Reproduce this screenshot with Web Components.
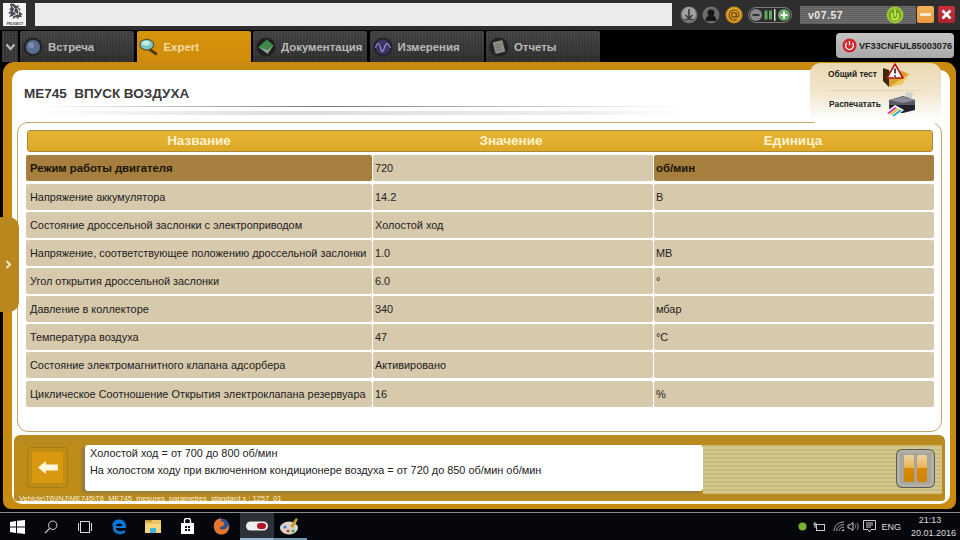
<!DOCTYPE html>
<html lang="ru"><head><meta charset="utf-8"><title>Expert</title>
<style>
html,body{margin:0;padding:0;width:960px;height:540px;overflow:hidden;background:#000;font-family:"Liberation Sans",Arial,sans-serif}
</style></head><body>
<app-shell></app-shell>
<script>
function def(name, html){
  const t=document.createElement('template');t.innerHTML=html;
  customElements.define(name,class extends HTMLElement{
    connectedCallback(){
      if(this.shadowRoot)return;
      const s=this.attachShadow({mode:'open'});s.appendChild(t.content.cloneNode(true));
      const h=customElements.get(name).after; if(h)h(this,s);
    }
  });
}
const icon={
lion:`<svg width="22" height="23" viewBox="0 0 22 23"><path d="M6 1c3-1 5 0 6 2l3-1-1 3 3 1-2 2 2 2 2 1-2 1 1 2-3 0-1 2-2-2-3 2 0-3-4 1 2-3-3-1 3-2-2-2 2-1z" fill="#4c4c54"/><path d="M8 3l3 3-2 2 4 3-4 2M13 5l2 3-1 4" stroke="#fff" stroke-width=".9" fill="none"/><text x="11" y="21.500" text-anchor="middle" font-family="Liberation Sans" font-weight="bold" font-size="3.400" fill="#444">PEUGEOT</text></svg>`,
dl:`<svg width="18" height="18" viewBox="0 0 18 18"><circle cx="9" cy="9" r="8.500" fill="#6f6f6f"/><circle cx="9" cy="8" r="7" fill="#a2a2a2"/><path d="M9 3v9M5.500 9 9 12.500 12.500 9M4.500 13.500h9" stroke="#3d3d3d" stroke-width="1.600" fill="none"/></svg>`,
user:`<svg width="18" height="18" viewBox="0 0 18 18"><circle cx="9" cy="9" r="8.500" fill="#6b6b6b"/><circle cx="9" cy="7" r="3.400" fill="#161616"/><path d="M3.500 15c0-4 2.500-5.500 5.500-5.500s5.500 1.500 5.500 5.500z" fill="#161616"/></svg>`,
at:`<svg width="18" height="18" viewBox="0 0 18 18"><circle cx="9" cy="9" r="8.500" fill="#c98b14"/><circle cx="9" cy="8.500" r="7" fill="#e0a430"/><circle cx="9" cy="9" r="2.400" fill="none" stroke="#6b4505" stroke-width="1.200"/><path d="M11.400 6.800v3.200c0 1.800 2.600 1.500 2.600-1 0-3-2.200-5-5-5a5 5 0 1 0 2.800 9.200" fill="none" stroke="#6b4505" stroke-width="1.200"/></svg>`,
zoom:`<svg width="44" height="16" viewBox="0 0 44 16"><rect x=".5" y=".5" width="43" height="15" rx="7.500" fill="#2c2c2c" stroke="#7c7c7c"/><circle cx="8" cy="8" r="6" fill="#8b8b8b"/><path d="M4.500 8h7" stroke="#333" stroke-width="2"/><rect x="16.500" y="3.500" width="3" height="9" fill="#5fa65f"/><rect x="21" y="3.500" width="3" height="9" fill="#5fa65f"/><rect x="26" y="2" width="1.500" height="12" fill="#ddd"/><circle cx="36" cy="8" r="6" fill="#66a866"/><path d="M32.500 8h7M36 4.500v7" stroke="#fff" stroke-width="2"/></svg>`,
green:`<svg width="18" height="18" viewBox="0 0 18 18"><circle cx="9" cy="9" r="8.500" fill="#98c62c"/><circle cx="9" cy="9" r="6" fill="#6fa51a"/><path d="M9 3.500v7M6 7v3.500a3 3 0 0 0 6 0V7" stroke="#d8ef6a" stroke-width="1.500" fill="none"/></svg>`,
power:`<svg width="15" height="15" viewBox="0 0 15 15"><circle cx="7.500" cy="7.500" r="7" fill="#d3252a"/><path d="M4.800 4.800a3.900 3.900 0 1 0 5.400 0M7.500 3v4.200" stroke="#fff" stroke-width="1.300" fill="none"/></svg>`,
globe:`<svg width="20" height="20" viewBox="0 0 24 24"><circle cx="12" cy="12" r="11.500" fill="#242424"/><circle cx="12" cy="12" r="8.500" fill="#5a6d92"/><circle cx="10" cy="10" r="3.500" fill="#7c8db0"/></svg>`,
lens:`<svg width="20" height="18" viewBox="0 0 26 22"><path d="M14 14l8 6" stroke="#4a3411" stroke-width="3.500" stroke-linecap="round"/><ellipse cx="10" cy="8" rx="9" ry="7" fill="#77c7c4" stroke="#5b5330" stroke-width="1.500"/><ellipse cx="9" cy="6" rx="5" ry="3" fill="#c4ece6"/></svg>`,
doc:`<svg width="20" height="20" viewBox="0 0 24 24"><circle cx="12" cy="12" r="11.500" fill="#202020"/><path d="M3 12 13 3l8 7-7 10z" fill="#3f8a46"/><path d="M3 12l11 8 7-10-7 6z" fill="#9aa39c"/></svg>`,
wave:`<svg width="20" height="20" viewBox="0 0 24 24"><circle cx="12" cy="12" r="11.500" fill="#222230"/><circle cx="12" cy="12" r="9" fill="#3b3560"/><path d="M3 13c2-7 4-7 6 0s3 5 5-1 4-5 7 1" fill="none" stroke="#a193e6" stroke-width="1.300"/></svg>`,
rep:`<svg width="20" height="20" viewBox="0 0 24 24"><circle cx="12" cy="12" r="11.500" fill="#222"/><rect x="6" y="5" width="12" height="14" rx="1" fill="#8e8e88" transform="rotate(-14 12 12)"/><path d="M8 9h8M8 12h8M8 15h6" stroke="#6f6f6a" transform="rotate(-14 12 12)"/></svg>`,
warn:`<svg width="28" height="25" viewBox="0 0 28 25"><path d="M1 5l6 2v17L1 18z" fill="#3a2a08"/><path d="M7 8h13l7 3-7 10-13 3z" fill="#d6a22c"/><path d="M7 24l20-13-7 10z" fill="#f0c755"/><path d="M12 1l8 14H4z" transform="translate(1 0)" fill="#fff" stroke="#b11" stroke-width="1.600" stroke-linejoin="round"/><path d="M13 5.500v5" stroke="#333" stroke-width="1.800"/><circle cx="13" cy="13" r="1" fill="#333"/></svg>`,
printer:`<svg width="32" height="27" viewBox="0 0 32 27"><path d="M20 7l1-6h7l-1 6z" fill="#cfcfcf"/><path d="M4 9 18 5l12 4v10H4z" fill="#5a5a66"/><path d="M4 9l14-3 12 3-12 3z" fill="#8c8c98"/><path d="M4 14h26v5l-12 3H8z" fill="#22222a"/><path d="M0 22l10-8 9 5-10 8z" fill="#fff"/><path d="M2 22l8-6 2 1-8 6z" fill="#d63ab0"/><path d="M4.500 23l8-6 2 1-8 6z" fill="#e6c92a"/><path d="M7 24.500l8-6 2 1-8 6z" fill="#2ca8d8"/></svg>`,
back:`<svg width="20" height="13" viewBox="0 0 23 15"><path d="M0 7.500 9 0v4h14v7H9v4z" fill="#fff6dc"/></svg>`,
win:`<svg width="15" height="14" viewBox="0 0 15 14"><path d="M0 2l6-1v5.500H0zM7 .8 15 0v6.500H7zM0 7.500h6V13l-6-1zM7 7.500h8V14l-8-1z" fill="#fff"/></svg>`,
search:`<svg width="14" height="14" viewBox="0 0 16 16"><circle cx="10" cy="6" r="4.800" fill="none" stroke="#ddd" stroke-width="1.100"/><path d="M6.500 9.500 1 15" stroke="#ddd" stroke-width="1.300"/></svg>`,
tv:`<svg width="16" height="12" viewBox="0 0 16 12"><rect x="3.500" y=".5" width="9" height="11" fill="none" stroke="#ddd"/><path d="M1.500 2v8M14.500 2v8" stroke="#ddd"/></svg>`,
edge:`<svg width="16" height="16" viewBox="0 0 16 16"><path d="M1 8c0-5 3-7.500 7-7.500 4.500 0 7.500 3 7 8.500H5c0 3.500 5 4.500 9 2v3c-5 2.500-12 1-12-5 0-2 .5-3 1-4 1-1.500 4-3 4-3C5 3 3 4 1 8zM5 7h6.500c0-3-6-3.500-6.500 0z" fill="#0a78d7"/></svg>`,
folder:`<svg width="16" height="15" viewBox="0 0 16 15"><rect y="1" width="16" height="13" fill="#e8c564"/><rect y="1" width="7" height="2" fill="#c99c34"/><rect y="5" width="16" height="9" fill="#f4d77e"/><rect x="5" y="9" width="6" height="5" fill="#44b4d8"/></svg>`,
store:`<svg width="15" height="17" viewBox="0 0 15 17"><path d="M1 5h13v11H1z" fill="#fff"/><path d="M4.500 5V2.500a2 2 0 0 1 2-2h2a2 2 0 0 1 2 2V5" stroke="#fff" fill="none" stroke-width="1.400"/><path d="M5 8h2v2H5zM8 8h2v2H8zM5 11h2v2H5zM8 11h2v2H8z" fill="#111"/></svg>`,
fox:`<svg width="17" height="17" viewBox="0 0 17 17"><circle cx="8.500" cy="8.500" r="8" fill="#31508f"/><path d="M1 8C1 3 4 .5 8 .5c1 1-1 2 1 3 3 0 3 4 0 5-3 0-3 3 0 3 3 0 6-2 7-5 .5 6-3 10-7.500 10C4 16.500 1 13 1 8z" fill="#e8762a"/></svg>`,
app:`<svg width="22" height="10" viewBox="0 0 22 10"><rect width="22" height="9" y=".5" rx="4.500" fill="#eee"/><rect x="11" y="2" width="9" height="6" rx="3" fill="#b01622"/></svg>`,
paint:`<svg width="20" height="18" viewBox="0 0 20 18"><ellipse cx="9" cy="11" rx="9" ry="6.500" fill="#d8d4c8"/><circle cx="5" cy="10" r="1.500" fill="#3a7bd5"/><circle cx="8" cy="14" r="1.500" fill="#d33"/><circle cx="13" cy="14" r="1.500" fill="#3a3"/><path d="M10 9 16 1l2 1.500L13 11z" fill="#c99a3a"/></svg>`,
trayok:`<svg width="9" height="9" viewBox="0 0 9 9"><circle cx="4.500" cy="4.500" r="4" fill="#74b52d"/></svg>`,
trayp:`<svg width="12" height="10" viewBox="0 0 12 10"><rect x="3.500" y="2.500" width="8" height="6" fill="none" stroke="#ccc"/><path d="M1 1h2v2H1zM2 3v3" stroke="#ccc" fill="none"/></svg>`,
wifi:`<svg width="12" height="11" viewBox="0 0 12 11"><path d="M1 10C1 5 5 1 11 1M3.500 10c0-3 3-6.500 7.500-6.500M6 10c0-2 2-4 5-4" stroke="#aaa" fill="none"/><path d="M8 10h3V8z" fill="#ccc"/></svg>`,
vol:`<svg width="12" height="11" viewBox="0 0 12 11"><path d="M1 4v3h2l3 2.500v-8L3 4z" fill="none" stroke="#ccc"/><path d="M8 3.500c1 1.500 1 2.500 0 4M10 2c1.500 2 1.500 5 0 7" stroke="#999" fill="none"/></svg>`,
note:`<svg width="13" height="13" viewBox="0 0 13 13"><path d="M.5.500h12v9H8L6.500 12 5 9.500H.5z" fill="none" stroke="#ccc"/><path d="M3 3h7M3 5h7M3 7h5" stroke="#ccc"/></svg>`
};

def('round-icon',`<style>:host{display:inline-flex;align-items:center;justify-content:center;flex:none}svg{display:block}</style><span id="i" style="display:contents"></span>`);
customElements.get('round-icon').after=(h,s)=>{s.getElementById('i').innerHTML=icon[h.getAttribute('name')]||''};

def('top-bar',`<style>
:host{display:flex;align-items:center;height:30px;box-sizing:border-box;padding:3px 0 4px 3px;background:#2e2e2e;flex:none}
.logo{width:23px;height:23px;background:#f4f4f4;display:flex;align-items:center;justify-content:center;margin-right:9px;flex:none}
.addr{width:637px;height:23px;background:#ececec;flex:none}
.tools{display:flex;align-items:center;margin-left:8px;height:23px;flex:none}
.tools>*{flex:none}
.ver{display:flex;align-items:center;justify-content:space-between;box-sizing:border-box;width:116px;height:18px;margin-left:8px;padding:0 12px 0 8px;font:bold 10.500px "Liberation Sans",sans-serif;letter-spacing:.5px;color:#e6e6e6;background:repeating-linear-gradient(#6f6f6f 0 1px,#5d5d5d 1px 2px)}
.b{width:17px;height:17px;border-radius:2px;display:flex;align-items:center;justify-content:center;box-sizing:border-box}
.min{background:linear-gradient(#f2b35e,#e8983a);margin-left:1px}
.min i{display:block;width:11px;height:3px;background:#fbe8cc}
.cl{background:linear-gradient(#c9333a,#a8242b);margin-left:4px;color:#fff}
</style>
<div class="logo"><round-icon name="lion"></round-icon></div>
<div class="addr"></div>
<div class="tools"><round-icon name="dl"></round-icon><round-icon name="user" style="margin-left:4px"></round-icon><round-icon name="at" style="margin-left:5px"></round-icon><round-icon name="zoom" style="margin-left:5px"></round-icon>
<div class="ver"><span>v07.57</span><round-icon name="green"></round-icon></div>
<div class="b min"><i></i></div><div class="b cl"><svg width="11" height="11" viewBox="0 0 11 11"><path d="M1.500 1.500l8 8M9.500 1.500l-8 8" stroke="#fff" stroke-width="2.600"/></svg></div></div>`);

def('app-tab',`<style>
:host{display:flex;align-items:center;box-sizing:border-box;width:114px;height:31px;padding-left:3px;gap:5px;border-radius:2px 2px 0 0;
background-color:#333;background-image:linear-gradient(#5a5a5a55,#1c1c1c55),repeating-conic-gradient(#424242 0 25%,#2f2f2f 0 50%);background-size:auto,3px 3px;font:bold 11.400px "Liberation Sans",sans-serif;color:#b9b9b9;flex:none;white-space:nowrap}
:host([active]){background:linear-gradient(#d8940c,#cf8c0a);color:#f2dca4;padding-left:2px;gap:5px}
::slotted(*){flex:none}
</style><slot name="icon"></slot><slot></slot>`);

def('tab-bar',`<style>
:host{display:flex;align-items:flex-end;height:32px;background:#000;flex:none;position:relative}
.chev{width:16px;height:31px;margin:0 2px;background-color:#333;background-image:repeating-conic-gradient(#424242 0 25%,#2f2f2f 0 50%);background-size:3px 3px;display:flex;align-items:center;justify-content:center;flex:none}
.tabs{display:flex;gap:2.500px;flex:none}
.vin{display:flex;align-items:center;gap:2px;box-sizing:border-box;width:118px;height:25px;margin:0 6px 4px auto;padding-left:6px;border-radius:4px;background:linear-gradient(#c4c4c4,#a9a9a9);font:bold 9.100px "Liberation Sans",sans-serif;color:#222;white-space:nowrap;flex:none}
</style>
<div class="chev"><svg width="11" height="8" viewBox="0 0 11 8"><path d="M1.500 1.500 5.500 6l4-4.500" fill="none" stroke="#b8b8b8" stroke-width="2.200"/></svg></div>
<div class="tabs"><slot></slot></div>
<div class="vin"><round-icon name="power"></round-icon><span>VF33CNFUL85003076</span></div>`);

def('data-row',`<style>
:host{display:grid;grid-template-columns:346px 280px 280px;gap:1px;height:26px;margin-bottom:2.150px;font:10.900px "Liberation Sans",sans-serif;color:#222}
div{background:#d6c9ac;display:flex;align-items:center;padding-left:2px;border-radius:2px;white-space:nowrap;overflow:hidden;box-sizing:border-box}
.n{padding-left:4px}
:host([hi]) .n,:host([hi]) .u{background:#a67e3e;font-weight:bold;font-size:11.300px;color:#1a1408}
</style><div class="n"><slot></slot></div><div><slot name="v"></slot></div><div class="u"><slot name="u"></slot></div>`);

def('data-table',`<style>
:host{display:block;box-sizing:border-box;margin:0 8px 0 5px;height:310px;padding:7px 0 0 8px;border:1px solid #c4a767;border-radius:11px;background:#fff}
.h{display:grid;grid-template-columns:342px 282px 282px;box-sizing:border-box;width:906px;height:22px;margin:0 0 3.400px 1px;background:linear-gradient(#e6b435,#dca826);border:1px solid #a98a3c;border-radius:3px;font:bold 13.500px "Liberation Sans",sans-serif;color:#fff3cf;line-height:19px;text-align:center}
</style><div class="h"><span>Название</span><span>Значение</span><span>Единица</span></div><slot></slot>`);

def('bottom-panel',`<style>
:host{display:flex;margin:3px 5px 0 2px;height:66px;box-sizing:border-box;background:#b98a20;border-radius:6px 6px 3px 3px;position:relative;padding:10px 3px 7px 0}
.in{display:flex;flex:1;background:#c08c18;border-radius:0 0 3px 3px;height:49px}
.left{width:71px;display:flex;justify-content:flex-start;align-items:flex-start;padding-left:14px;box-sizing:border-box}
.back{box-sizing:border-box;width:39px;height:39px;margin-top:3px;background:#d8980f;border:4px solid #bf8c14;box-shadow:0 0 0 1px #a27c1c;border-radius:3px;display:flex;align-items:center;justify-content:center}
.msg{box-sizing:border-box;width:618px;height:46px;background:#fff;border-radius:3px;padding:0 5px;font:10.900px/17px "Liberation Sans",sans-serif;color:#222;box-shadow:-3px 2px 3px #8d7a4a}
.str{flex:1;position:relative;height:49px;background:repeating-linear-gradient(#c8bb7c 0 2px,#d4c890 2px 4px)}
.path{position:absolute;left:5px;bottom:-2px;font:7.500px "Liberation Sans",sans-serif;color:#f8f0d0;white-space:nowrap}
.pause{position:absolute;right:8px;top:5px;box-sizing:border-box;width:37px;height:37px;border:3px solid #b2afa4;box-shadow:0 0 0 1px #5a5a56;border-radius:5px;background:#a8a59a;display:flex;gap:3px;align-items:center;justify-content:center}
.pause i{display:block;width:10px;height:27px;border-radius:2px;background:linear-gradient(#efd5a0,#e8b45a 46%,#d98a04 50%,#cf8404)}
</style><div class="in"><div class="left"><div class="back"><round-icon name="back"></round-icon></div></div>
<div class="msg"><slot></slot></div><div class="str"><div class="pause"><i></i><i></i></div></div></div>
<div class="path">Vehicle\\T6\\INJ\\ME745\\T6_ME745_mesures_parametres_standard.s : 1257_01</div>`);

def('side-menu',`<style>
:host{position:absolute;left:810px;top:1px;width:131px;height:62px;box-sizing:border-box;border-radius:10px 10px 12px 12px;background:linear-gradient(#e9d9b1 0,#f2e7cf 50%,#fff 92%);font:bold 8.400px "Liberation Sans",sans-serif;color:#222}
.r{display:flex;align-items:flex-start;padding-left:18px;white-space:nowrap}
.r1{height:27px;line-height:22px}
.r2{height:34px;line-height:26px;padding-left:19px}
.r1 span{width:54px}
.r2 span{width:56px}
.l{border-top:1px solid #e3d6b8;margin:0 18px}
</style><div class="r r1"><span>Общий тест</span><round-icon name="warn"></round-icon></div><div class="l"></div>
<div class="r r2"><span>Распечатать</span><round-icon name="printer" ></round-icon></div>`);

def('side-handle',`<style>
:host{position:absolute;left:0;top:217px;width:19px;height:95px;background:#b8881f;border-radius:0 10px 10px 0;display:flex;align-items:center;justify-content:center}
svg{margin-right:2px}
</style><svg width="7" height="9" viewBox="0 0 7 9"><path d="M1.500 1 5 4.500 1.500 8" fill="none" stroke="#f2e7c8" stroke-width="2"/></svg>`);

def('main-frame',`<style>
:host{display:flex;flex-direction:column;box-sizing:border-box;margin:0 4px 0 3px;height:447px;background:#c88b10;border-radius:11px 11px 8px 8px;padding:8px 6px 5px 9px;flex:none}
.w{flex:1;background:#fff;border-radius:10px;display:flex;flex-direction:column;position:relative}
.t{font:bold 13.500px "Liberation Sans",sans-serif;color:#3a3a3a;padding:16px 0 0 12px;height:20px;white-space:pre}
.line{height:1px;margin:0 268px 0 22px;background:linear-gradient(90deg,#fff,#777 45%,#ddd 85%,#fff)}
.line2{height:4px;margin:4px 268px 0 22px;background:linear-gradient(90deg,#fff,#ddd 40%,#eee 85%,#fff)}
.s{height:7px}
</style><div class="w"><div class="t">ME745  ВПУСК ВОЗДУХА</div><div class="line"></div><div class="line2"></div><div class="s"></div><slot></slot></div>`);

def('task-bar',`<style>
:host{display:flex;align-items:center;height:28px;background:#05070c;border-top:1px solid #8d8d8d;box-sizing:border-box;flex:none;color:#ddd;font:9px "Liberation Sans",sans-serif}
.c{display:flex;align-items:center;justify-content:center;width:34px;height:100%;box-sizing:border-box;flex:none}
.on{background:#2d3138;border-bottom:2px solid #8fb6d8;margin-left:2px}
.u{border-bottom:2px solid #6f94b4;margin-left:-1px}
.tray{margin-left:auto;display:flex;align-items:center;padding-right:11px}
.clock{text-align:center;line-height:13px;width:38px;margin-left:10px;white-space:nowrap}
</style>
<div class="c"><round-icon name="win"></round-icon></div><div class="c"><round-icon name="search"></round-icon></div><div class="c"><round-icon name="tv"></round-icon></div><div class="c"><round-icon name="edge"></round-icon></div><div class="c"><round-icon name="folder"></round-icon></div><div class="c"><round-icon name="store"></round-icon></div><div class="c"><round-icon name="fox"></round-icon></div><div class="c on"><round-icon name="app"></round-icon></div><div class="c u"><round-icon name="paint"></round-icon></div>
<div class="tray"><round-icon name="trayok"></round-icon><round-icon name="trayp" style="margin-left:6px"></round-icon><round-icon name="wifi" style="margin-left:8px"></round-icon><round-icon name="vol" style="margin-left:2px"></round-icon><round-icon name="note" style="margin-left:4px"></round-icon><span style="margin-left:5px">ENG</span><div class="clock">21:13<br>20.01.2016</div></div>`);

const rows=[['Режим работы двигателя','720','об/мин',1],['Напряжение аккумулятора','14.2','В'],['Состояние дроссельной заслонки с электроприводом','Холостой ход',''],['Напряжение, соответствующее положению дроссельной заслонки','1.0','МВ'],['Угол открытия дроссельной заслонки','6.0','°'],['Давление в коллекторе','340','мбар'],['Температура воздуха','47','°C'],['Состояние электромагнитного клапана адсорбера','Активировано',''],['Циклическое Соотношение Открытия электроклапана резервуара','16','%']];
const rowHtml=rows.map(r=>`<data-row ${r[3]?'hi':''}>${r[0]}<span slot="v">${r[1]}</span><span slot="u">${r[2]}</span></data-row>`).join('');

def('app-shell',`<style>
:host{display:flex;flex-direction:column;width:960px;height:540px;position:relative;background:#000}
.fr{position:relative;flex:none}
</style>
<top-bar></top-bar>
<tab-bar>
<app-tab><round-icon slot="icon" name="globe"></round-icon>Встреча</app-tab>
<app-tab active><round-icon slot="icon" name="lens"></round-icon>Expert</app-tab>
<app-tab><round-icon slot="icon" name="doc"></round-icon>Документация</app-tab>
<app-tab><round-icon slot="icon" name="wave"></round-icon>Измерения</app-tab>
<app-tab><round-icon slot="icon" name="rep"></round-icon>Отчеты</app-tab>
</tab-bar>
<div class="fr"><main-frame>
<data-table>${rowHtml}</data-table>
<bottom-panel>Холостой ход = от 700 до 800 об/мин<br>На холостом ходу при включенном кондиционере воздуха = от 720 до 850 об/мин об/мин</bottom-panel>
</main-frame><side-menu></side-menu></div>
<side-handle></side-handle>
<div style="flex:1"></div>
<task-bar></task-bar>`);
</script>
</body></html>
